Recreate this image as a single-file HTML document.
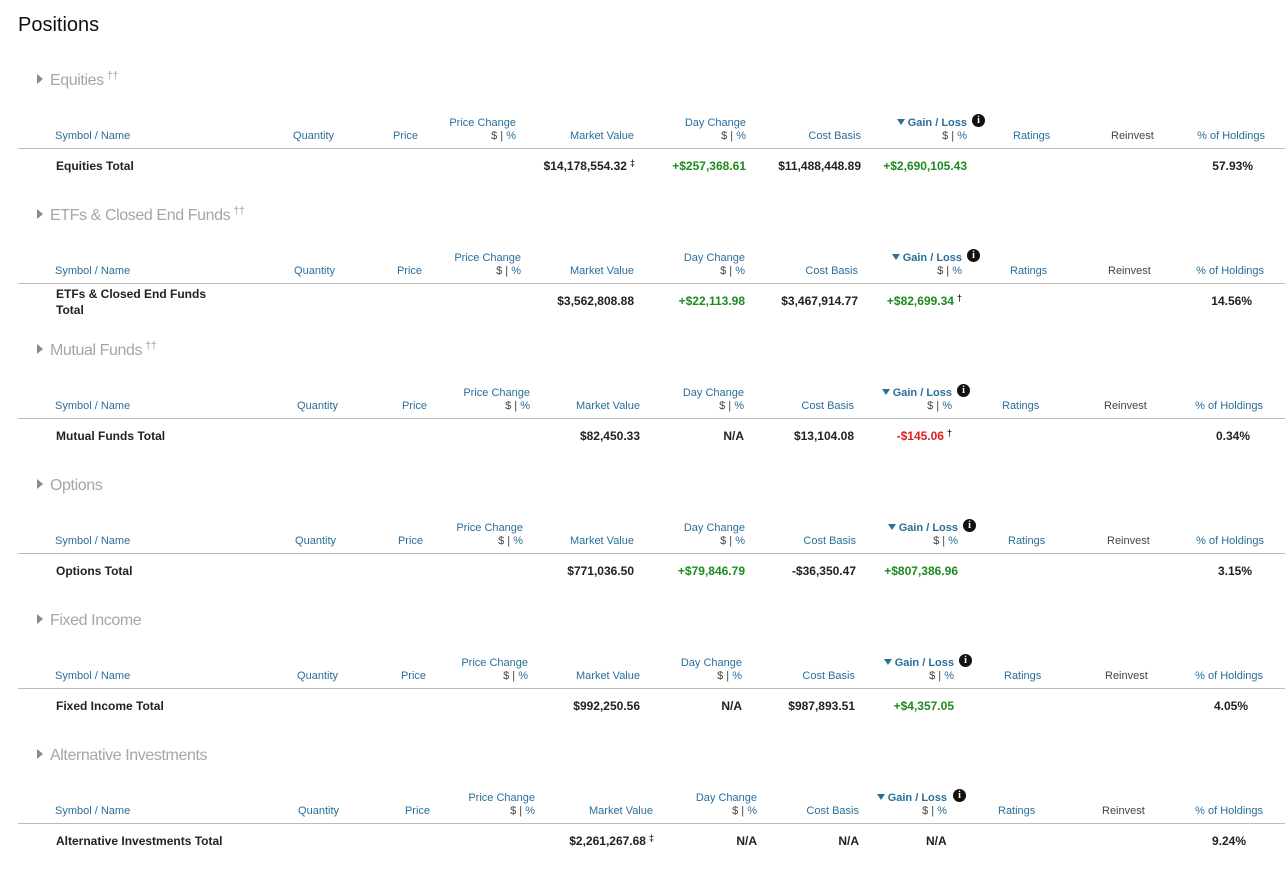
<!DOCTYPE html>
<html><head><meta charset="utf-8"><style>
*{margin:0;padding:0;box-sizing:border-box}
body{width:1285px;height:869px;background:#fff;font-family:"Liberation Sans",Arial,sans-serif;position:relative;overflow:hidden}
h1{position:absolute;left:18px;top:14px;font-size:20px;font-weight:normal;color:#111}
.s{position:absolute;left:0;width:1285px;height:135px}
.s span,.s div{position:absolute;white-space:nowrap}
.t{left:37px;top:12px;font-size:16px;color:#a6a6a6;font-weight:300;letter-spacing:-0.4px}
.t i{font-style:normal;display:inline-block;border-left:6px solid #8a8a8a;border-top:5px solid transparent;border-bottom:5px solid transparent;margin-right:7px;vertical-align:1px;width:0;height:0}
.t sup{font-size:11px;line-height:0;vertical-align:6px;margin-left:3px}
.a,.b{font-size:11px;color:#2a6e9a;line-height:12px}
.a{top:57px}.b{top:70px}
.b .d{color:#444}
.g{font-weight:bold;color:#2a6e9a}
.g:before{content:"";display:inline-block;border-top:6px solid #2a6e9a;border-left:4px solid transparent;border-right:4px solid transparent;margin-right:3px;vertical-align:1px}
.ic{width:13px;height:13px;border-radius:50%;background:#111;color:#fff;font-size:10px;font-weight:bold;text-align:center;line-height:13px;font-family:"Liberation Serif",serif}
.blk{color:#444}
.ln{left:18px;right:0;top:88px;height:1px;background:#bbb}
.v{top:99px;font-size:12px;font-weight:bold;color:#222;line-height:14px}
.gr{color:#1f8a1f}.rd{color:#e02020}
.v sup{font-size:9px;line-height:0;vertical-align:4px;margin-left:3px;color:#222}
.n{left:56px}
</style></head><body>
<h1>Positions</h1>

<div class="s" style="top:60px">
<div class="t"><i></i>Equities<sup>††</sup></div>
<span class="b" style="left:55px">Symbol / Name</span>
<span class="b" style="right:951px">Quantity</span>
<span class="b" style="right:867px">Price</span>
<span class="a" style="right:769px">Price Change</span><span class="b" style="right:769px"><span class="d" style="position:static">$ |</span> %</span>
<span class="b" style="right:651px">Market Value</span>
<span class="a" style="right:539px">Day Change</span><span class="b" style="right:539px"><span class="d" style="position:static">$ |</span> %</span>
<span class="b" style="right:424px">Cost Basis</span>
<span class="a g" style="right:318px">Gain / Loss</span><span class="ic" style="left:972px;top:54px">i</span><span class="b" style="right:318px"><span class="d" style="position:static">$ |</span> %</span>
<span class="b" style="left:1013px">Ratings</span>
<span class="b blk" style="left:1111px">Reinvest</span>
<span class="b" style="right:20px">% of Holdings</span>
<div class="ln"></div>
<span class="v n">Equities Total</span>
<span class="v" style="right:650px">$14,178,554.32<sup>‡</sup></span>
<span class="v gr" style="right:539px">+$257,368.61</span>
<span class="v" style="right:424px">$11,488,448.89</span>
<span class="v gr" style="right:318px">+$2,690,105.43</span>
<span class="v" style="right:32px">57.93%</span>
</div>

<div class="s" style="top:195px">
<div class="t"><i></i>ETFs &amp; Closed End Funds<sup>††</sup></div>
<span class="b" style="left:55px">Symbol / Name</span>
<span class="b" style="right:950px">Quantity</span>
<span class="b" style="right:863px">Price</span>
<span class="a" style="right:764px">Price Change</span><span class="b" style="right:764px"><span class="d" style="position:static">$ |</span> %</span>
<span class="b" style="right:651px">Market Value</span>
<span class="a" style="right:540px">Day Change</span><span class="b" style="right:540px"><span class="d" style="position:static">$ |</span> %</span>
<span class="b" style="right:427px">Cost Basis</span>
<span class="a g" style="right:323px">Gain / Loss</span><span class="ic" style="left:967px;top:54px">i</span><span class="b" style="right:323px"><span class="d" style="position:static">$ |</span> %</span>
<span class="b" style="left:1010px">Ratings</span>
<span class="b blk" style="left:1108px">Reinvest</span>
<span class="b" style="right:21px">% of Holdings</span>
<div class="ln"></div>
<span class="v n" style="top:91px;line-height:16px">ETFs &amp; Closed End Funds<br>Total</span>
<span class="v" style="right:651px">$3,562,808.88</span>
<span class="v gr" style="right:540px">+$22,113.98</span>
<span class="v" style="right:427px">$3,467,914.77</span>
<span class="v gr" style="right:323px">+$82,699.34<sup>†</sup></span>
<span class="v" style="right:33px">14.56%</span>
</div>

<div class="s" style="top:330px">
<div class="t"><i></i>Mutual Funds<sup>††</sup></div>
<span class="b" style="left:55px">Symbol / Name</span>
<span class="b" style="right:947px">Quantity</span>
<span class="b" style="right:858px">Price</span>
<span class="a" style="right:755px">Price Change</span><span class="b" style="right:755px"><span class="d" style="position:static">$ |</span> %</span>
<span class="b" style="right:645px">Market Value</span>
<span class="a" style="right:541px">Day Change</span><span class="b" style="right:541px"><span class="d" style="position:static">$ |</span> %</span>
<span class="b" style="right:431px">Cost Basis</span>
<span class="a g" style="right:333px">Gain / Loss</span><span class="ic" style="left:957px;top:54px">i</span><span class="b" style="right:333px"><span class="d" style="position:static">$ |</span> %</span>
<span class="b" style="left:1002px">Ratings</span>
<span class="b blk" style="left:1104px">Reinvest</span>
<span class="b" style="right:22px">% of Holdings</span>
<div class="ln"></div>
<span class="v n">Mutual Funds Total</span>
<span class="v" style="right:645px">$82,450.33</span>
<span class="v" style="right:541px">N/A</span>
<span class="v" style="right:431px">$13,104.08</span>
<span class="v rd" style="right:333px">-$145.06<sup>†</sup></span>
<span class="v" style="right:35px">0.34%</span>
</div>

<div class="s" style="top:465px">
<div class="t"><i></i>Options</div>
<span class="b" style="left:55px">Symbol / Name</span>
<span class="b" style="right:949px">Quantity</span>
<span class="b" style="right:862px">Price</span>
<span class="a" style="right:762px">Price Change</span><span class="b" style="right:762px"><span class="d" style="position:static">$ |</span> %</span>
<span class="b" style="right:651px">Market Value</span>
<span class="a" style="right:540px">Day Change</span><span class="b" style="right:540px"><span class="d" style="position:static">$ |</span> %</span>
<span class="b" style="right:429px">Cost Basis</span>
<span class="a g" style="right:327px">Gain / Loss</span><span class="ic" style="left:963px;top:54px">i</span><span class="b" style="right:327px"><span class="d" style="position:static">$ |</span> %</span>
<span class="b" style="left:1008px">Ratings</span>
<span class="b blk" style="left:1107px">Reinvest</span>
<span class="b" style="right:21px">% of Holdings</span>
<div class="ln"></div>
<span class="v n">Options Total</span>
<span class="v" style="right:651px">$771,036.50</span>
<span class="v gr" style="right:540px">+$79,846.79</span>
<span class="v" style="right:429px">-$36,350.47</span>
<span class="v gr" style="right:327px">+$807,386.96</span>
<span class="v" style="right:33px">3.15%</span>
</div>

<div class="s" style="top:600px">
<div class="t"><i></i>Fixed Income</div>
<span class="b" style="left:55px">Symbol / Name</span>
<span class="b" style="right:947px">Quantity</span>
<span class="b" style="right:859px">Price</span>
<span class="a" style="right:757px">Price Change</span><span class="b" style="right:757px"><span class="d" style="position:static">$ |</span> %</span>
<span class="b" style="right:645px">Market Value</span>
<span class="a" style="right:543px">Day Change</span><span class="b" style="right:543px"><span class="d" style="position:static">$ |</span> %</span>
<span class="b" style="right:430px">Cost Basis</span>
<span class="a g" style="right:331px">Gain / Loss</span><span class="ic" style="left:959px;top:54px">i</span><span class="b" style="right:331px"><span class="d" style="position:static">$ |</span> %</span>
<span class="b" style="left:1004px">Ratings</span>
<span class="b blk" style="left:1105px">Reinvest</span>
<span class="b" style="right:22px">% of Holdings</span>
<div class="ln"></div>
<span class="v n">Fixed Income Total</span>
<span class="v" style="right:645px">$992,250.56</span>
<span class="v" style="right:543px">N/A</span>
<span class="v" style="right:430px">$987,893.51</span>
<span class="v gr" style="right:331px">+$4,357.05</span>
<span class="v" style="right:37px">4.05%</span>
</div>

<div class="s" style="top:735px">
<div class="t"><i></i>Alternative Investments</div>
<span class="b" style="left:55px">Symbol / Name</span>
<span class="b" style="right:946px">Quantity</span>
<span class="b" style="right:855px">Price</span>
<span class="a" style="right:750px">Price Change</span><span class="b" style="right:750px"><span class="d" style="position:static">$ |</span> %</span>
<span class="b" style="right:632px">Market Value</span>
<span class="a" style="right:528px">Day Change</span><span class="b" style="right:528px"><span class="d" style="position:static">$ |</span> %</span>
<span class="b" style="right:426px">Cost Basis</span>
<span class="a g" style="right:338px">Gain / Loss</span><span class="ic" style="left:953px;top:54px">i</span><span class="b" style="right:338px"><span class="d" style="position:static">$ |</span> %</span>
<span class="b" style="left:998px">Ratings</span>
<span class="b blk" style="left:1102px">Reinvest</span>
<span class="b" style="right:22px">% of Holdings</span>
<div class="ln"></div>
<span class="v n">Alternative Investments Total</span>
<span class="v" style="right:631px">$2,261,267.68<sup>‡</sup></span>
<span class="v" style="right:528px">N/A</span>
<span class="v" style="right:426px">N/A</span>
<span class="v" style="left:926px">N/A</span>
<span class="v" style="right:39px">9.24%</span>
</div>
</body></html>
